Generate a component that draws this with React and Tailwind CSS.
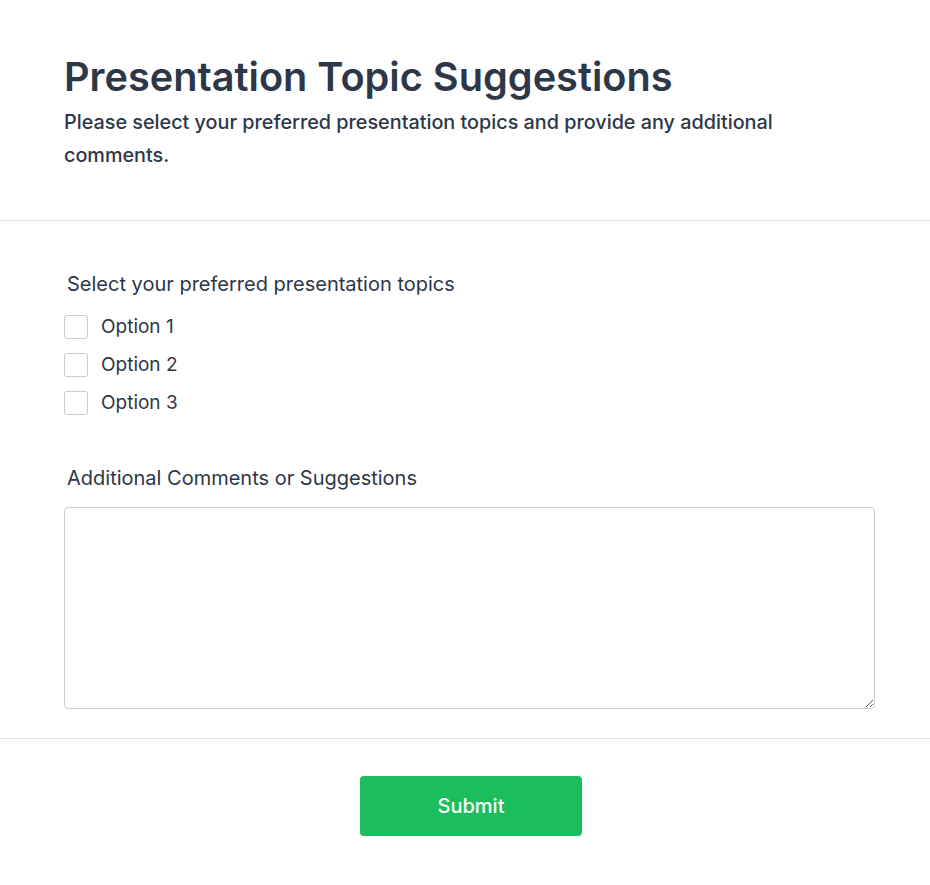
import React from "react";

export default function App() {
  return (
    <div className="min-h-[885px] w-full bg-white text-[#2d3748]" style={{ fontFamily: "Inter, 'Noto Sans', sans-serif" }}>
      <header className="border-b border-[#e2e3ea] px-16 pt-[53px] pb-[48px]">
        <h1 className="text-[39.7px] font-semibold leading-[48px] text-[#2d3748]">Presentation Topic Suggestions</h1>
        <p className="mt-[5px] max-w-[760px] text-[19.8px] font-medium leading-[33px] text-[#2d3748]">
          Please select your preferred presentation topics and provide any additional comments.
        </p>
      </header>
      <main className="border-b border-[#e2e3ea] pl-16 pr-[55px] pt-[49px] pb-[29px]">
        <fieldset>
          <legend className="ml-[3px] text-[20px] font-normal leading-[28px] text-[#2d3748]">Select your preferred presentation topics</legend>
          <div className="mt-[17px] flex flex-col gap-[14px]">
            {["Option 1", "Option 2", "Option 3"].map((o) => (
              <label key={o} className="flex h-[24px] items-center gap-[13px]">
                <span className="h-[24px] w-[24px] rounded-[3px] border border-[#c9cbd6] bg-white" />
                <span className="text-[19px] leading-[24px] text-[#2d3748]">{o}</span>
              </label>
            ))}
          </div>
        </fieldset>
        <div className="mt-[49px]">
          <label className="ml-[3px] block text-[20px] font-normal leading-[28px] text-[#2d3748]">Additional Comments or Suggestions</label>
          <textarea className="mt-[15px] block h-[202px] w-full rounded-[4px] border border-[#c9cbd6] bg-white" />
        </div>
      </main>
      <div className="flex justify-center pl-[12px] pt-[37px] pb-[49px]">
        <button className="h-[60px] w-[222px] rounded-[4px] bg-[#1bbd5c] text-[20px] font-medium text-white">Submit</button>
      </div>
    </div>
  );
}
